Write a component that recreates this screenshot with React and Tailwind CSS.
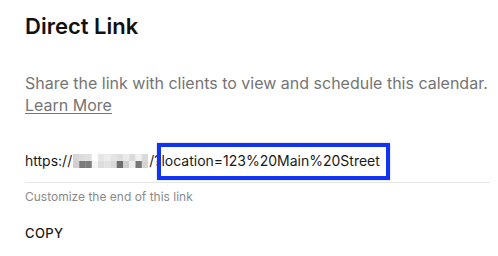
import React from "react";

const cells = [
  ["#d6d6d6", "#d0d0d0"],
  ["#dcdcdc", "#7a7a7a"],
  ["#e0e0e0", "#7c7c7c"],
  ["#ffffff", "#f4f4f4"],
  ["#e6e6e6", "#dcdcdc"],
  ["#ececec", "#e2e2e2"],
  ["#e4e4e4", "#d8d8d8"],
  ["#dedede", "#6e6e6e"],
  ["#eaeaea", "#cfcfcf"],
  ["#dadada", "#ececec"],
  ["#f0f0f0", "#767676"],
  ["#dadada", "#d4d4d4"],
];

function Pixelated() {
  return (
    <svg width="75" height="14" viewBox="0 0 75 14" className="block mx-[1px]">
      {cells.map((c, i) => (
        <g key={i}>
          <rect x={i * 6.25} y="0" width="6.5" height="7" fill={c[0]} />
          <rect x={i * 6.25} y="7" width="6.5" height="7" fill={c[1]} />
        </g>
      ))}
    </svg>
  );
}

export default function App() {
  return (
    <div
      className="w-[498px] h-[256px] bg-white pl-[25px] pr-[8px] overflow-hidden"
      style={{ fontFamily: "Inter, 'Noto Sans', sans-serif" }}
    >
      <h1 className="pt-[12px] text-[22px] leading-[28px] font-semibold text-[#111]">
        Direct Link
      </h1>
      <p className="mt-[32px] text-[16px] leading-[22px] text-[#757575]">
        <span className="whitespace-nowrap">
          Share the link with clients to view and schedule this calendar.
        </span>
        <br />
        <span className="underline underline-offset-2">Learn More</span>
      </p>
      <div className="mt-[35px] w-[465px] border-b border-[#e6e6e6] pb-[11px]">
        <div className="flex items-center text-[14px] leading-[20px] text-[#1a1a1a]">
          <span>https://</span>
          <Pixelated />
          <span>/?</span>
          <span className="relative">
            location=123%20Main%20Street
            <span className="absolute -left-[4px] -right-[10px] -top-[8px] -bottom-[9px] border-[4px] border-[#1033f5] shadow-[0_0_2px_rgba(0,0,0,0.25)]"></span>
          </span>
        </div>
      </div>
      <p className="mt-[6px] text-[12px] leading-[16px] text-[#8a8a8a]">
        Customize the end of this link
      </p>
      <p className="mt-[20px] text-[13px] leading-[16px] font-medium tracking-[0.03em] text-[#1a1a1a]">
        COPY
      </p>
    </div>
  );
}
